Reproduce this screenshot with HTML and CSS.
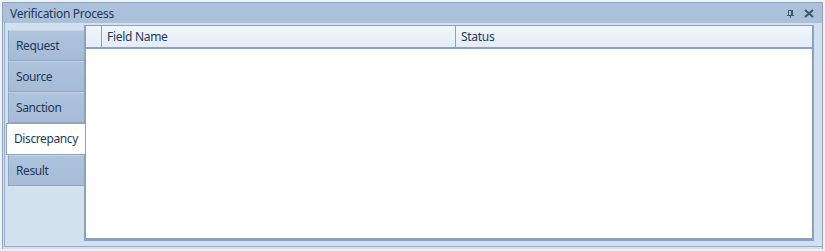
FILE: index.html
```html
<!DOCTYPE html>
<html lang="en">
<head>
    <meta charset="UTF-8">
    <title>Verification Process</title>
    <link rel="stylesheet" href="styles.css">
</head>
<body>
    <div class="window">
        <div class="titlebar">
            <span class="title">Verification Process</span>
            <div class="title-buttons">
                <!-- pin -->
                <svg width="9" height="9" viewBox="0 0 9 9">
                    <path d="M2 1h5M2.5 1v5M6.5 1v5M5 1v5M1 6h7M4.5 6v3" stroke="#3d5572" stroke-width="1" fill="none" shape-rendering="crispEdges"/>
                </svg>
                <!-- close -->
                <svg width="10" height="9" viewBox="0 0 10 9">
                    <path d="M1 1l8 7M9 1l-8 7" stroke="#3d5572" stroke-width="2" fill="none"/>
                </svg>
            </div>
        </div>
        <div class="frame">
            <ul class="tabs">
                <li class="tab">Request</li>
                <li class="tab">Source</li>
                <li class="tab">Sanction</li>
                <li class="tab active">Discrepancy</li>
                <li class="tab">Result</li>
            </ul>
            <div class="panel">
                <div class="grid-header">
                    <div class="col indicator"></div>
                    <div class="col field">Field Name</div>
                    <div class="col status">Status</div>
                </div>
                <div class="grid-body"></div>
            </div>
        </div>
    </div>
</body>
</html>
```

FILE: styles.css
```css
/* Verification panel */
body {
    margin: 0;
    padding: 0;
    font-family: "Noto Sans", "Open Sans", sans-serif;
    font-size: 12px;
    color: #1e395b; /* navy text */
    background-color: #eef2f7;
}
.window {
    margin: 2px 2px 0 2px;
    height: 246px;
    border: 1px solid #8ea4bf;
    border-bottom: none;
    background-color: #d3e0ee; /* light blue body */
    display: flex;
    flex-direction: column;
}
.titlebar {
    height: 20px;
    background-color: #abc1da;
    display: flex;
    align-items: center;
    justify-content: space-between;
    padding: 0 8px 0 7px;
}
.title {
    font-size: 12px;
    letter-spacing: -0.3px;
    color: #1e395b;
}
.title-buttons {
    display: flex;
    align-items: center;
    gap: 9px;
    padding-top: 1px;
}
.frame {
    flex: 1;
    display: flex;
    margin: 0 0 2px 1px;
    padding: 2px 8px 5px 0;
    border-left: 1px solid #98acc4;
    border-bottom: 1px solid #98acc4;
}
.tabs {
    list-style-type: none;
    margin: 5px 0 0 0;
    padding: 0;
    width: 79px;
}
.tab {
    height: 29px;
    line-height: 29px;
    margin-left: 3px;
    padding-left: 7px;
    background: linear-gradient(#aec3dc, #a6bcd6);
    border: 1px solid #8ea6c2;
    border-right: none;
    border-top-color: #c4d3e5;
    letter-spacing: -0.4px;
}
.tab.active {
    margin-left: 1px;
    padding-left: 7px;
    background: #fff;
    border-color: #8ea6c2;
    position: relative;
    z-index: 1;
    margin-right: -1px;
    height: 30px;
    line-height: 30px;
}
.panel {
    flex: 1;
    background-color: #fff;
    border: 1px solid #8aa2bf;
    border-left: 2px solid #8aa2bf;
    border-bottom: 3px solid #8aa2bf;
    border-right: 2px solid #8aa2bf;
    display: flex;
    flex-direction: column;
}
.grid-header {
    display: flex;
    height: 21px;
    background: linear-gradient(#f1f6fc, #e3ecf8);
    border-bottom: 2px solid #8aa2bf;
}
.col {
    line-height: 21px;
    letter-spacing: -0.3px;
}
.indicator {
    width: 15px;
    border-right: 1px solid #8aa2bf;
}
.field {
    width: 348px;
    padding-left: 5px;
    border-right: 1px solid #8aa2bf;
}
.status {
    padding-left: 5px;
}
.grid-body {
    flex: 1;
}
```
